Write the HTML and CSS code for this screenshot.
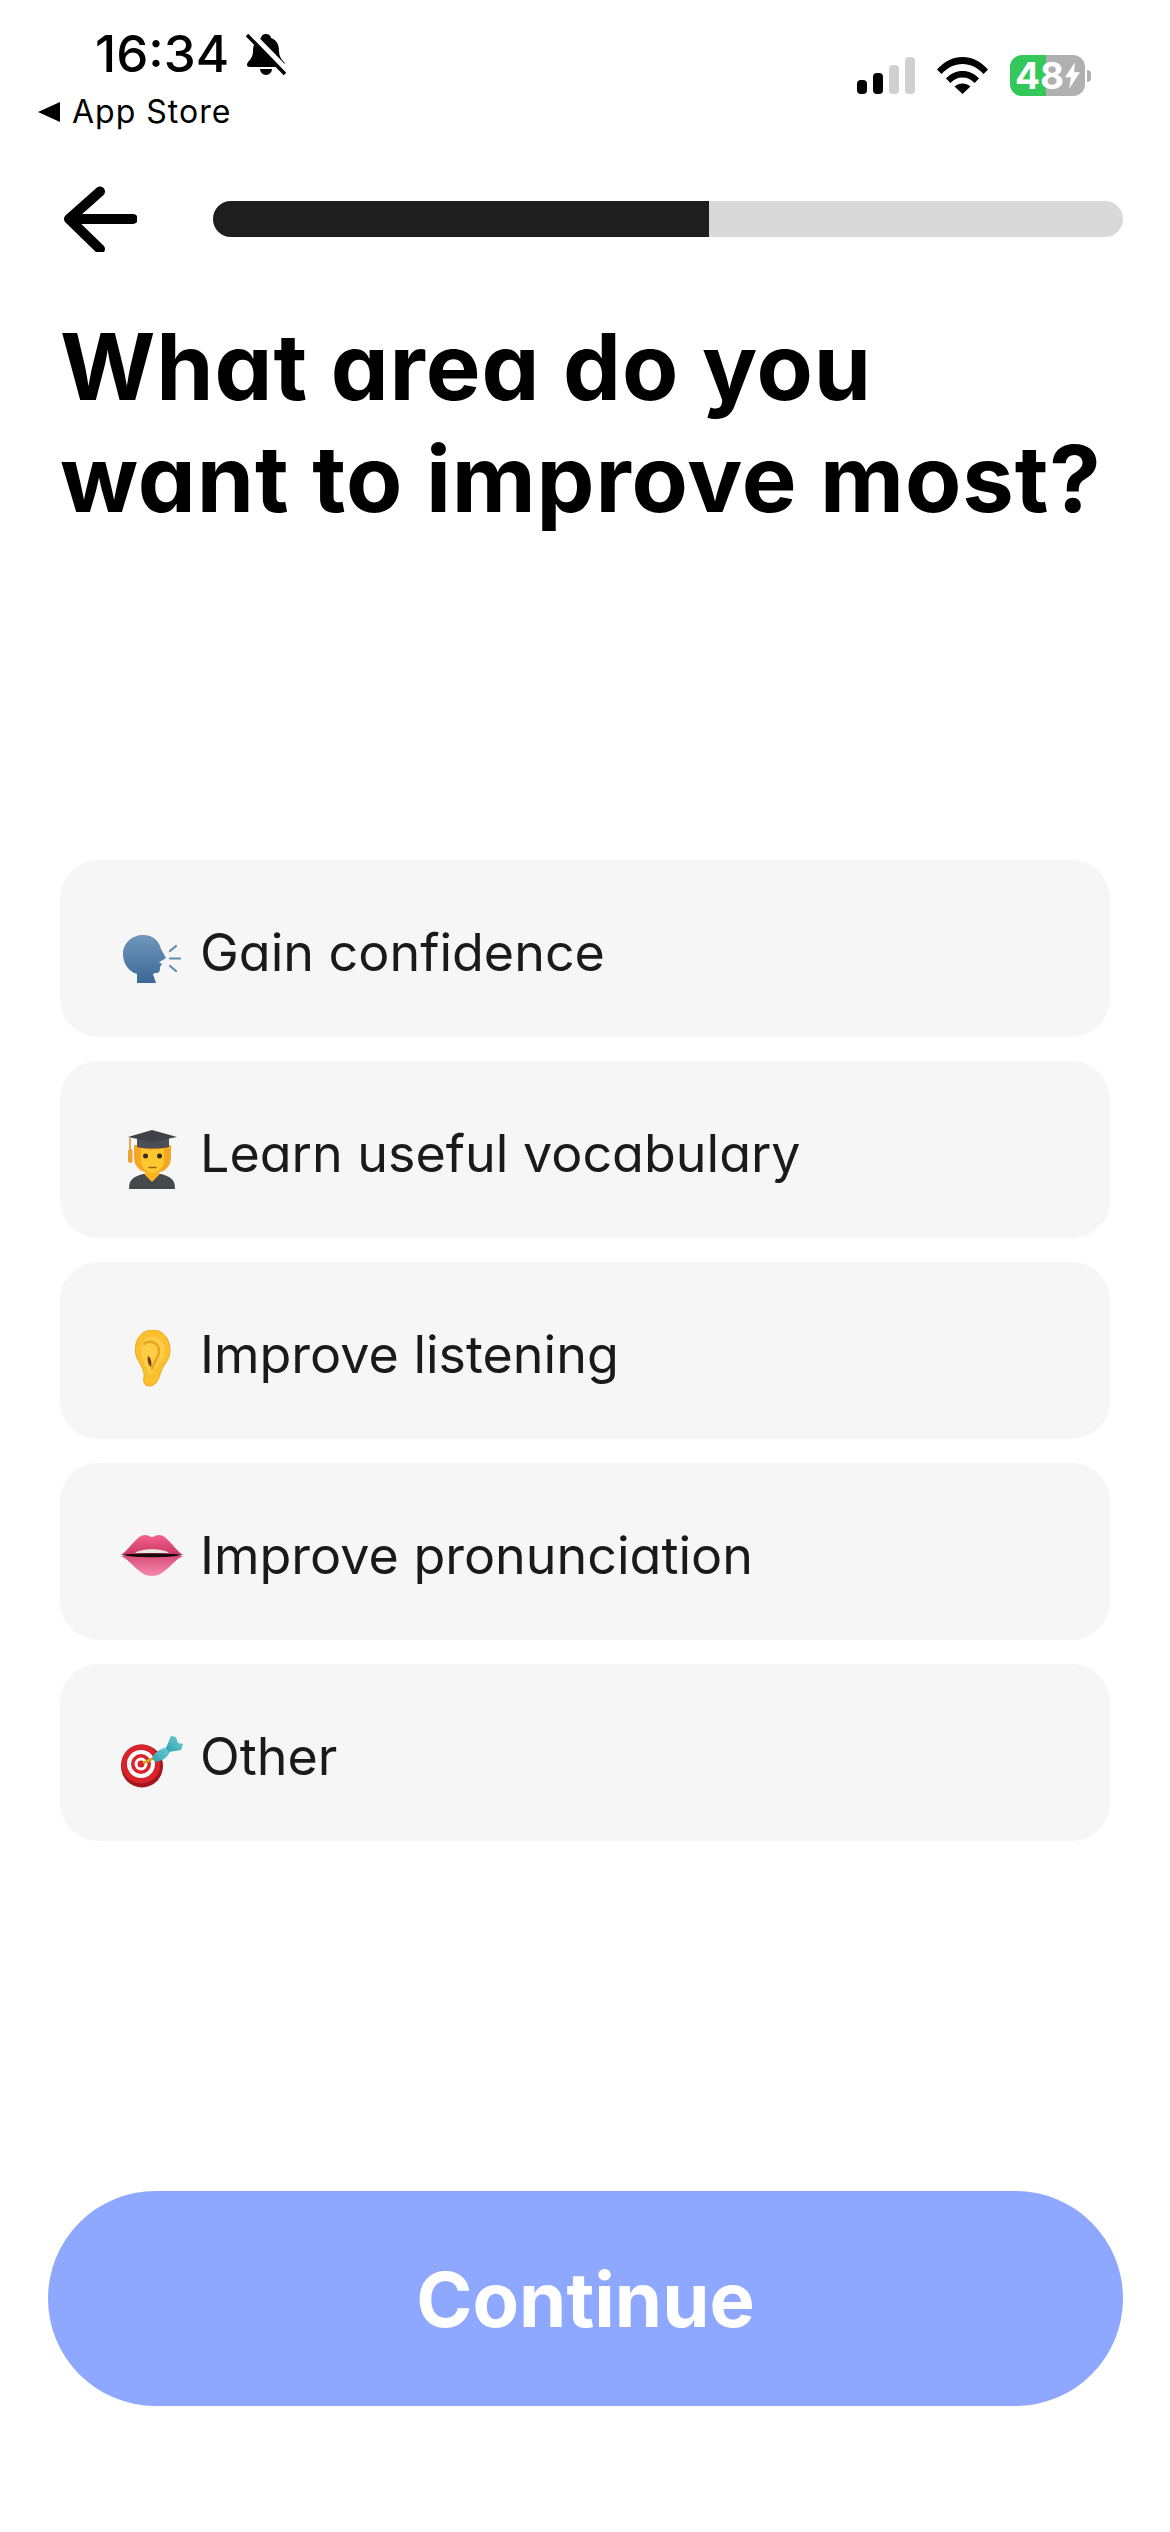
FILE: index.html
```html
<!DOCTYPE html>
<html lang="en">
<head>
  <meta charset="UTF-8" />
  <meta name="viewport" content="width=device-width, initial-scale=1.0"/>
  <title>What area do you want to improve most?</title>
  <link rel="stylesheet" href="styles.css">
</head>
<body>
  <div class="status-bar">
    <div class="status-left">
      <div class="status-time">
        <span>16:34</span>
        <svg class="bell" viewBox="0 0 40 42">
          <path d="M20 1c3 0 5 2 5 4 6 2 8 7 8 13 0 5 2 8 5 11 2 3 1 5-2 5H4c-3 0-4-2-2-5 3-3 5-6 5-11 0-6 2-11 8-13 0-2 2-4 5-4z" fill="#000"/>
          <path d="M14 36h12c0 3-3 6-6 6s-6-3-6-6z" fill="#000"/>
          <path d="M2 -1L42 40" stroke="#fff" stroke-width="8"/>
          <path d="M1 2L39 41" stroke="#000" stroke-width="3.6"/>
        </svg>
      </div>
      <div class="status-back"><span class="back-triangle"></span><span>App Store</span></div>
    </div>
    <div class="status-right">
      <svg class="signal" viewBox="0 0 58 37">
        <rect x="0" y="23" width="10" height="14" rx="4" fill="#000"/>
        <rect x="16" y="16" width="10" height="21" rx="4" fill="#000"/>
        <rect x="32" y="8" width="10" height="29" rx="4" fill="#d0d0d0"/>
        <rect x="48" y="0" width="10" height="37" rx="4" fill="#d0d0d0"/>
      </svg>
      <svg class="wifi" viewBox="0 0 51 37">
        <path d="M0 12.5C7 4.500 16 0 25.500 0S44 4.500 51 12.500L46.500 17C40.500 10.500 33.500 7 25.500 7S10.500 10.500 4.500 17z" fill="#000"/>
        <path d="M9 21.500C13.500 16.500 19 14 25.500 14S37.500 16.500 42 21.500L37.500 26C34.500 22.500 30.500 20.500 25.500 20.500S16.500 22.500 13.500 26z" fill="#000"/>
        <path d="M17.500 29.500C20 27.500 22.500 26.500 25.500 26.500S31 27.500 33.500 29.500L25.500 37z" fill="#000"/>
      </svg>
      <div class="battery-wrap">
        <div class="battery">
          <span>48</span>
          <svg class="bolt" viewBox="0 0 18 32"><path d="M12 0L0 18h7L5 32 18 12h-7z" fill="#fff"/></svg>
        </div>
        <span class="battery-nub"></span>
      </div>
    </div>
  </div>

  <header class="top-bar">
    <svg class="back-arrow" viewBox="0 0 76 66">
      <path d="M39 5.500L8 33l31 30M8 33h64" fill="none" stroke="#000" stroke-width="10" stroke-linecap="round" stroke-linejoin="round"/>
    </svg>
    <div class="progress"><div class="progress-fill" style="width:54.5%"></div></div>
  </header>

  <h1 class="title">What area do you<br>want to improve most?</h1>

  <section class="options">
    <div class="option">
      <svg class="emoji" viewBox="0 0 62 62">
        <defs><linearGradient id="headFill" x1="0" y1="0" x2="0" y2="1"><stop offset="0" stop-color="#7096bb"/><stop offset="1" stop-color="#3c6896"/></linearGradient></defs>
        <path d="M16 55V46C7 43 2 35 2 26 2 15 11 7 22 7c10 0 16 6 18 14l5 9-3 2-4 2 3 2-2 3c0 4 0 6-5 6l-2 1 3 9z" fill="url(#headFill)"/>
        <path d="M49 23l6-5M49 30.500h10M49 38l6 5" stroke="#5f8ab2" stroke-width="2.200" stroke-linecap="round" fill="none"/>
      </svg>
      <span>Gain confidence</span>
    </div>
    <div class="option">
      <svg class="emoji" viewBox="0 -6 62 62">
        <path d="M8 54c0-10 4-12 14-15h18c10 3 14 5 14 15z" fill="#46484c"/>
        <path d="M24 33h14v7l-7 7-7-7z" fill="#f8b31f"/>
        <path d="M13 10h37v12c0 7-3 10-6 13-3 2-7 3-12 3s-10-1-13-3c-3-3-6-6-6-13z" fill="#f5a623"/>
        <path d="M20 13c7 2 16 2 23 0v12c0 7-5 13-11.500 13S20 32 20 25z" fill="#fdc72e"/>
        <circle cx="24.500" cy="21" r="2.500" fill="#3a2a18"/>
        <circle cx="38.500" cy="21" r="2.500" fill="#3a2a18"/>
        <path d="M28 32.500h7" stroke="#a8601c" stroke-width="1.500" stroke-linecap="round"/>
        <path d="M16 3h32v9c-9 2-23 2-32 0z" fill="#4b4e55"/>
        <path d="M7 2L31 -5 56 2 31 7z" fill="#3f4248"/>
        <path d="M9 3v12" stroke="#e8952c" stroke-width="1.600"/>
        <rect x="7" y="14" width="4.500" height="14" rx="2.200" fill="#f0a232"/>
      </svg>
      <span>Learn useful vocabulary</span>
    </div>
    <div class="option">
      <svg class="emoji" viewBox="0 -4 62 62">
        <path d="M32 -4C42 -4 49 5 49 16 49 25 44 29 41 35 38 42 37 52 28 52 23 52 22 47 23 43 24 37 19 30 16 24 12 15 15 -4 32 -4z" fill="#fbc02d" stroke="#eda81a" stroke-width="1"/>
        <path d="M20 17C19 6 28 1 35 3 43 6 45 15 43 22 41 28 36 31 33 37 31 41 29 43 27 38 25 30 21 26 20 17z" fill="#fdcc49"/>
        <path d="M23 10C29 5 38 9 38 17 38 24 33 27 31 35" fill="none" stroke="#eba51c" stroke-width="2.500" stroke-linecap="round"/>
        <path d="M27 22C30 24 31 28 30 33 27 31 26 26 27 22z" fill="#6a3d0a"/>
      </svg>
      <span>Improve listening</span>
    </div>
    <div class="option">
      <svg class="emoji" viewBox="0 0 62 62">
        <defs>
          <linearGradient id="lipTop" x1="0" y1="0" x2="0" y2="1"><stop offset="0" stop-color="#f4618c"/><stop offset="1" stop-color="#c93867"/></linearGradient>
          <linearGradient id="lipBottom" x1="0" y1="0" x2="0" y2="1"><stop offset="0" stop-color="#d94f7d"/><stop offset="1" stop-color="#f58aab"/></linearGradient>
        </defs>
        <path d="M0 24C9 18 16 4 24 4c3 0 5 2 7 2s4-2 7-2c8 0 15 14 24 20z" fill="url(#lipTop)"/>
        <path d="M0 25C12 31 18 45 31 45S50 31 62 25z" fill="url(#lipBottom)"/>
        <path d="M14 22c6-5 28-5 34 0z" fill="#e9e6e2"/>
        <path d="M1 24c10-2 50-2 60 0-10 3-50 3-60 0z" fill="#15090c"/>
      </svg>
      <span>Improve pronunciation</span>
    </div>
    <div class="option">
      <svg class="emoji" viewBox="0 0 62 62">
        <defs><linearGradient id="dartFill" x1="0" y1="1" x2="1" y2="0"><stop offset="0" stop-color="#2f9fae"/><stop offset="1" stop-color="#6fd0d6"/></linearGradient></defs>
        <ellipse cx="21" cy="34" rx="21" ry="21.500" fill="#a3151c"/>
        <ellipse cx="20" cy="32" rx="19.500" ry="19.500" fill="#d8232a"/>
        <circle cx="20" cy="32" r="14" fill="#fff"/>
        <circle cx="20" cy="32" r="10" fill="#d8232a"/>
        <circle cx="20" cy="32" r="6.500" fill="#fff"/>
        <circle cx="20" cy="32" r="3.500" fill="#d8232a"/>
        <path d="M22 31l11-5" stroke="#d8a11f" stroke-width="2.500"/>
        <path d="M31 26c3-6 8-9 15-11l3 5c-3 6-8 9-15 10z" fill="url(#dartFill)"/>
        <path d="M45 16L50 4l5 1 2 6 5 1-2 6-12 2z" fill="url(#dartFill)"/>
      </svg>
      <span>Other</span>
    </div>
  </section>

  <div class="bottom">
    <button class="continue-button">Continue</button>
  </div>
</body>
</html>
```
FILE: styles.css
```css
*{margin:0;padding:0;box-sizing:border-box}
html,body{height:100%;background:#fff}
body{width:1170px;height:2532px;overflow:hidden;font-family:'Inter','Liberation Sans',sans-serif;font-feature-settings:'cv11';color:#000}

.status-bar{display:flex;justify-content:space-between;height:170px;padding:31px 79px 0 38px}
.status-left{display:flex;flex-direction:column}
.status-time{display:flex;align-items:center;gap:17px;padding-left:57px;font-size:51px;font-weight:500;line-height:46px;height:46px}
.bell{width:40px;height:42px}
.status-back{display:flex;align-items:center;gap:12px;margin-top:16px;font-size:32px;line-height:38px;letter-spacing:1px}
.back-triangle{width:0;height:0;border-style:solid;border-width:10.500px 22px 10.500px 0;border-color:transparent #000 transparent transparent}
.status-right{display:flex;align-items:flex-start;padding-top:26px}
.signal{width:58px;height:37px}
.wifi{width:51px;height:37px;margin-left:22px}
.battery-wrap{display:flex;align-items:center;margin-left:22px;margin-top:-2px}
.battery{display:flex;align-items:center;justify-content:center;gap:1px;width:75px;height:41px;border-radius:12px;background:linear-gradient(90deg,#34c759 48%,#b0b0b0 48%);color:#fff;font-size:37px;font-weight:700;line-height:41px}
.bolt{width:15px;height:27px}
.battery-nub{width:4px;height:12px;border-radius:0 6px 6px 0;background:#b0b0b0;margin-left:2px}

.top-bar{display:flex;align-items:center;padding:0 47px 0 61px;height:66px;margin-top:16px}
.back-arrow{width:76px;height:66px}
.progress{flex:1;height:36px;margin-left:76px;border-radius:18px;background:#d9d9d9;overflow:hidden}
.progress-fill{height:100%;background:#1e1e1e}

.title{margin-top:59px;padding-left:60px;font-size:92px;font-weight:650;line-height:112px;letter-spacing:.9px;color:#000;white-space:nowrap}

.options{display:flex;flex-direction:column;gap:24px;margin-top:325px;padding:0 60px}
.option{display:flex;align-items:center;gap:17px;height:177px;padding:8px 0 0 61px;background:#f6f6f6;border-radius:38px;font-size:52px;font-weight:400;color:#1a1a1a}
.emoji{width:62px;height:62px;flex:none;margin-top:12px}

.bottom{padding:0 47px 0 48px;margin-top:350px}
.continue-button{display:block;width:100%;height:215px;border:none;border-radius:108px;background:#8fa8ff;color:#fff;font-family:inherit;font-feature-settings:inherit;font-size:76px;font-weight:700}
```
